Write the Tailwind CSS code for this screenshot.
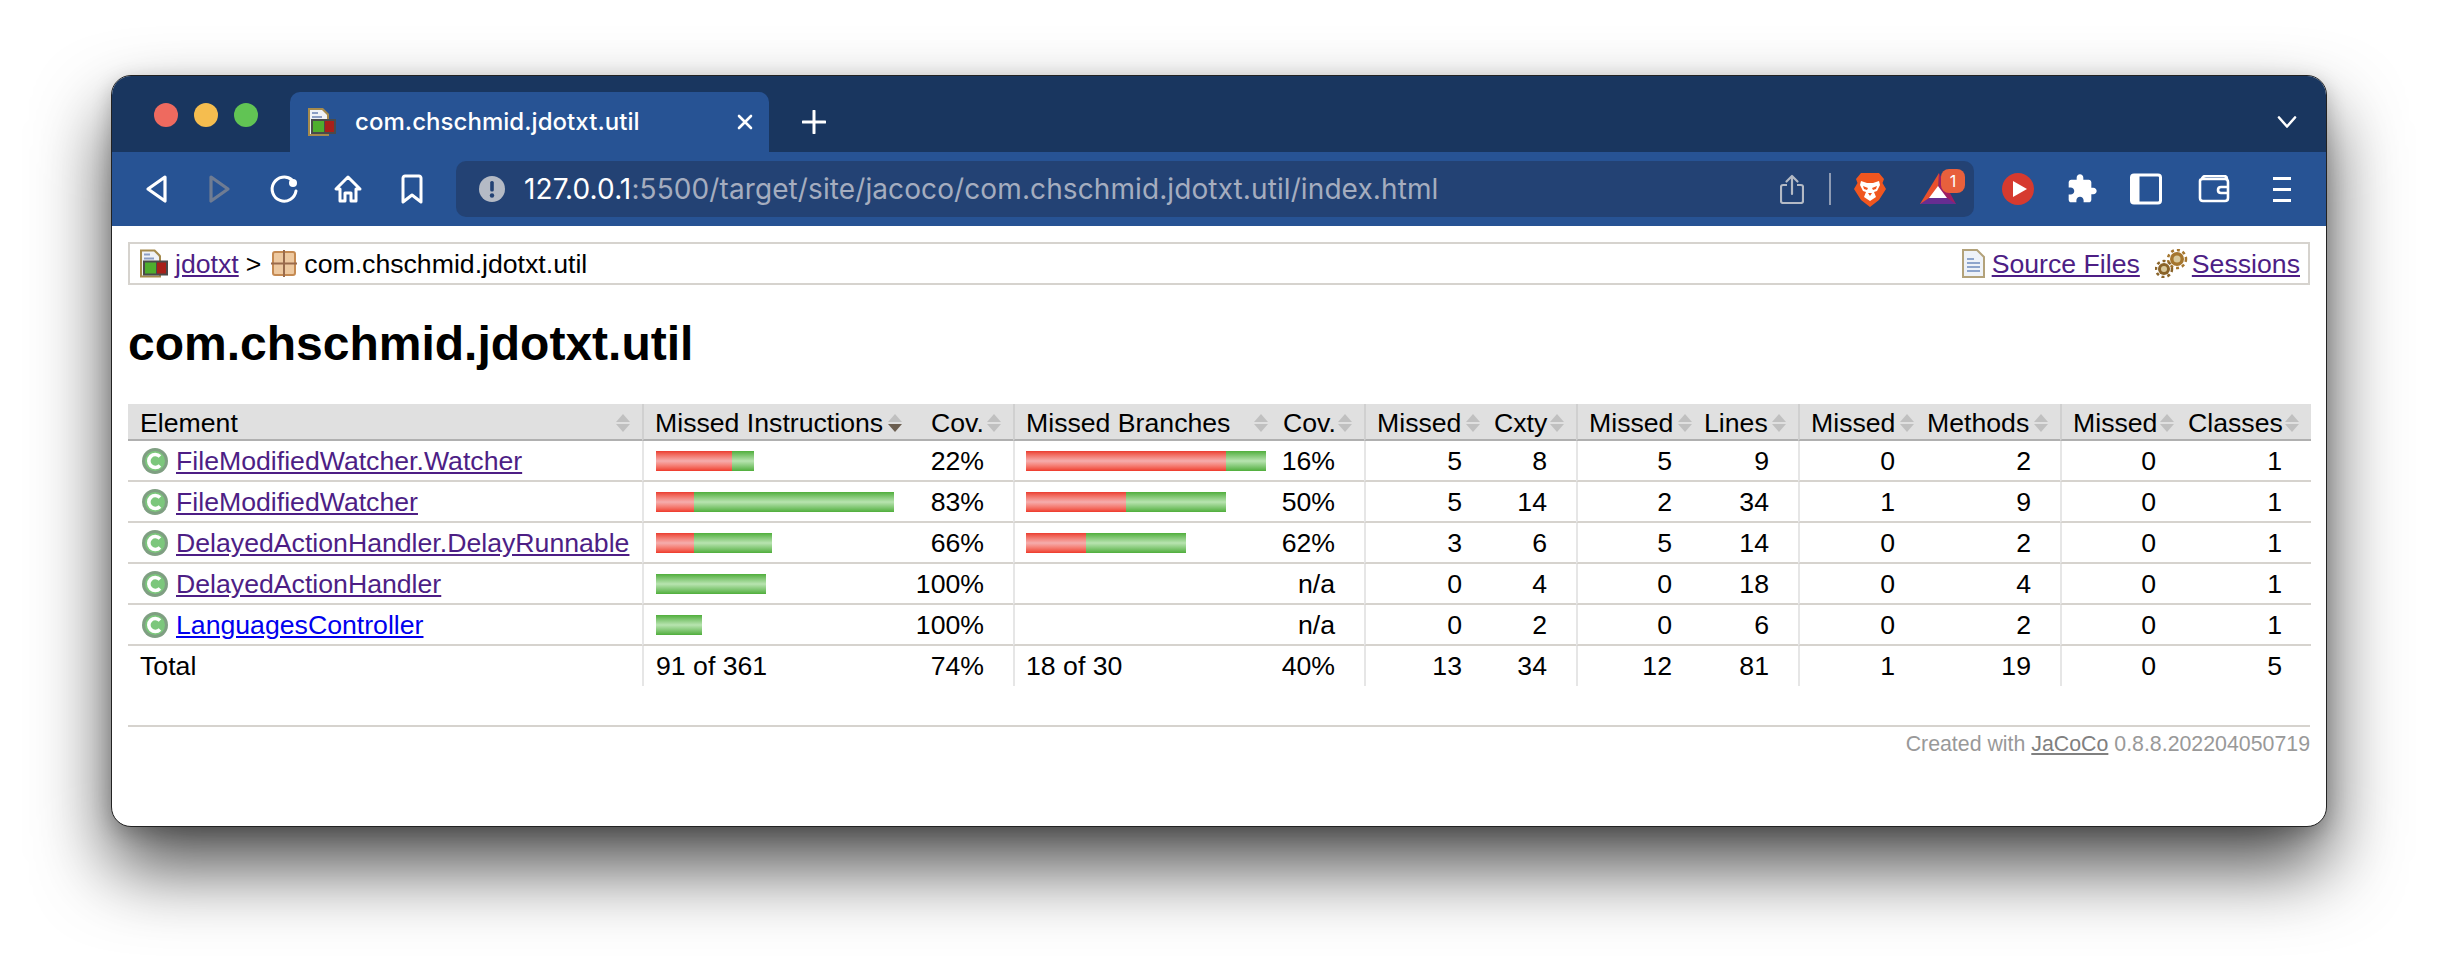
<!doctype html>
<html><head><meta charset="utf-8"><title>com.chschmid.jdotxt.util</title>
<script src="https://cdn.jsdelivr.net/npm/@tailwindcss/browser@4"></script></head>
<body class="w-[2438px] h-[974px] overflow-hidden bg-white pt-[75px] pl-[111px] [font-family:'Liberation_Sans',Arial,sans-serif]">
<div class="w-[2216px] h-[752px] rounded-[20px] border border-[#222] overflow-hidden bg-white shadow-[0_40px_74px_rgba(0,0,0,0.7),0_6px_20px_rgba(0,0,0,0.2)] flex flex-col">
  <!-- tab strip -->
  <div class="h-[76px] bg-[#19365f] flex items-end pl-[42px] shrink-0 [font-family:Inter,sans-serif]">
    <div class="self-start mt-[27px] flex gap-4">
      <div class="w-6 h-6 rounded-full bg-[#ee6a5f]"></div>
      <div class="w-6 h-6 rounded-full bg-[#f5bd4f]"></div>
      <div class="w-6 h-6 rounded-full bg-[#61c454]"></div>
    </div>
    <div class="ml-8 w-[479px] h-[60px] rounded-t-[10px] bg-[#275394] flex items-center pl-[18px] text-white text-[24px] font-medium">
      <svg width="28" height="28" viewBox="0 0 28 28" class="shrink-0"><path d="M0 0H15L21 6V28H0Z" fill="#a58a4c"/><path d="M2 2H14L19 7V26H2Z" fill="#f0f2f6"/><rect x="4" y="4" width="6" height="2" fill="#8b9dc3"/><rect x="4" y="8" width="10" height="2" fill="#8b9dc3"/><rect x="3" y="11" width="25" height="15" fill="#4a4a4a"/><rect x="5" y="13" width="11" height="11" fill="#4fae2e"/><rect x="17" y="13" width="9" height="11" fill="#a8201a"/></svg>
      <span class="ml-[19px] tracking-[0.05px]">com.chschmid.jdotxt.util</span>
      <svg width="18" height="18" viewBox="0 0 18 18" class="ml-auto mr-[15px]"><path d="M3 3L15 15M15 3L3 15" stroke="#fff" stroke-width="2.6" stroke-linecap="round"/></svg>
    </div>
    <svg width="24" height="24" viewBox="0 0 24 24" class="ml-[33px] mb-[18px]"><path d="M12 1V23M1 12H23" stroke="#fff" stroke-width="3" stroke-linecap="round"/></svg>
    <svg width="20" height="12" viewBox="0 0 20 12" class="ml-auto mr-[29px] mb-[24px]"><path d="M2 1.5L10 10.5L18 1.5" fill="none" stroke="#fff" stroke-width="2.6" stroke-linecap="round" stroke-linejoin="round"/></svg>
  </div>
  <!-- toolbar -->
  <div class="h-[74px] bg-[#275394] flex items-center pl-[28px] shrink-0 [font-family:Inter,sans-serif]">
    <div class="flex gap-8">
      <svg width="32" height="32" viewBox="0 0 32 32"><path d="M25 4L8 16L25 28Z" fill="none" stroke="#fff" stroke-width="3.2" stroke-linejoin="round"/></svg>
      <svg width="32" height="32" viewBox="0 0 32 32"><path d="M7 4L24 16L7 28Z" fill="none" stroke="#6f7c93" stroke-width="3.2" stroke-linejoin="round"/></svg>
      <svg width="32" height="32" viewBox="0 0 32 32"><path d="M24 7A12 12 0 1 0 28 18" fill="none" stroke="#fff" stroke-width="3" stroke-linecap="round"/><circle cx="25" cy="10" r="4" fill="#fff"/></svg>
      <svg width="32" height="32" viewBox="0 0 32 32"><path d="M16 4L4 16L8 16V28H13V20H19V28H24V16L28 16Z" fill="none" stroke="#fff" stroke-width="3" stroke-linejoin="round"/></svg>
      <svg width="32" height="32" viewBox="0 0 32 32"><path d="M7 5C7 4 8 3 9 3H23C24 3 25 4 25 5V29L16 22L7 29Z" fill="none" stroke="#fff" stroke-width="3" stroke-linejoin="round"/></svg>
    </div>
    <div class="ml-[28px] w-[1518px] h-14 rounded-[10px] bg-[#234274] flex items-center pl-[23px]">
      <svg width="26" height="26" viewBox="0 0 26 26" class="shrink-0"><circle cx="13" cy="13" r="13" fill="#b4bac5"/><rect x="11.2" y="5" width="3.6" height="10.5" rx="1.6" fill="#234274"/><circle cx="13" cy="19.5" r="2.2" fill="#234274"/></svg>
      <span class="ml-[19px] text-[28px] tracking-[0.1px] text-white whitespace-nowrap">127.0.0.1<span class="text-[#a5adbf]">:5500/target/site/jacoco/com.chschmid.jdotxt.util/index.html</span></span>
      <svg width="24" height="30" viewBox="0 0 24 30" class="ml-auto shrink-0"><path d="M7 11H3C2 11 1 12 1 13V27C1 28 2 29 3 29H21C22 29 23 28 23 27V13C23 12 22 11 21 11H17" fill="none" stroke="#b4bac5" stroke-width="2.2"/><path d="M12 20V2M6.5 7.5L12 2L17.5 7.5" fill="none" stroke="#b4bac5" stroke-width="2.2" stroke-linecap="round" stroke-linejoin="round"/></svg>
      <div class="ml-[25px] w-[2px] h-[32px] bg-[#8e9bb3]"></div>
      <svg width="32" height="35" viewBox="0 0 32 35" class="ml-[23px] shrink-0"><path d="M7 1L25 1L30 7L28.500 11L32 17L25 28L16 35L7 28L0 17L3.500 11L2 7Z" fill="#f0561f"/><path d="M7 9L13 11H19L25 9L26 13L23 19L20 20L22 25L16 29L10 25L12 20L9 19L6 13Z" fill="#fff"/><path d="M9 14L14 16L13 18L10 17ZM23 14L18 16L19 18L22 17ZM14 21H18L16 24Z" fill="#f0561f"/></svg>
      <div class="relative ml-[34px] mr-[18px] w-9 h-8 shrink-0">
        <svg width="36" height="32" viewBox="0 0 36 32"><path d="M19 0L0 31L18 31Z" fill="#e9502c"/><path d="M19 0L36 31L18 31Z" fill="#9e1f63"/><path d="M0 31L9 25H27L36 31Z" fill="#662d91"/><path d="M18 13L27 25H9Z" fill="#fff"/></svg>
        <div class="absolute -right-[9px] -top-[4px] w-6 h-6 rounded-[8px] bg-[#e8603c] text-white text-[16px] leading-6 text-center">1</div>
      </div>
    </div>
    <svg width="32" height="32" viewBox="0 0 32 32" class="ml-[28px] shrink-0"><circle cx="16" cy="16" r="16" fill="#d63a2f"/><path d="M11 8L25 16L11 24Z" fill="#fff"/></svg>
    <svg width="32" height="32" viewBox="0 0 24 24" class="ml-[32px] shrink-0"><path fill="#fff" d="M20.5 11H19V7c0-1.100-.9-2-2-2h-4V3.500C13 2.120 11.880 1 10.500 1S8 2.120 8 3.500V5H4c-1.100 0-1.990.9-1.990 2v3.800H3.500c1.490 0 2.700 1.210 2.700 2.700s-1.210 2.700-2.700 2.700H2V20c0 1.100.9 2 2 2h3.800v-1.500c0-1.490 1.210-2.700 2.700-2.700 1.490 0 2.700 1.210 2.700 2.700V22H17c1.100 0 2-.9 2-2v-4h1.500c1.380 0 2.500-1.120 2.500-2.500S21.880 11 20.500 11z"/></svg>
    <svg width="32" height="32" viewBox="0 0 32 32" class="ml-[32px] shrink-0"><rect x="1.500" y="2" width="29" height="28" rx="2.500" fill="none" stroke="#fff" stroke-width="3"/><rect x="1.500" y="2" width="8" height="28" fill="#fff"/></svg>
    <svg width="32" height="28" viewBox="0 0 32 28" class="ml-[36px] shrink-0"><path d="M4 4C4 2 6 1 8 1H26C28 1 29 2 29 4M2 6C2 5 3 4 5 4H27C29 4 30 5 30 7V23C30 25 29 26 27 26H5C3 26 2 25 2 23Z" fill="none" stroke="#fff" stroke-width="2.600"/><path d="M30 12H23C21 12 20 13 20 15C20 17 21 18 23 18H30" fill="none" stroke="#fff" stroke-width="2.600"/></svg>
    <div class="ml-[43px] w-[18px] flex flex-col gap-[8px] shrink-0"><div class="h-[3px] bg-white"></div><div class="h-[3px] bg-white"></div><div class="h-[3px] bg-white"></div></div>
  </div>
  <!-- page -->
  <div class="flex-1 pl-4 text-[26.67px] text-black">
    <div class="mt-[16px] w-[2182px] h-[43px] border-2 border-[#d6d3ce] flex items-center pl-[10px] pr-[8px] whitespace-nowrap">
      <svg width="28" height="29" viewBox="0 0 28 28"><path d="M0 0H15L21 6V28H0Z" fill="#a58a4c"/><path d="M2 2H14L19 7V26H2Z" fill="#f0f2f6"/><rect x="4" y="4" width="6" height="2" fill="#8b9dc3"/><rect x="4" y="8" width="10" height="2" fill="#8b9dc3"/><rect x="3" y="11" width="25" height="15" fill="#4a4a4a"/><rect x="5" y="13" width="11" height="11" fill="#4fae2e"/><rect x="17" y="13" width="9" height="11" fill="#a8201a"/></svg>
      <a class="ml-[7px] underline text-[#4d1e85]">jdotxt</a>
      <span class="ml-[7px]">&gt;</span>
      <svg width="26" height="27" viewBox="0 0 26 27" class="ml-[10px]"><rect x="2" y="2" width="22" height="23" rx="2" fill="#eec9a0" stroke="#c58a52" stroke-width="2"/><path d="M13 0V27M0 13.500H26" stroke="#9a6b4c" stroke-width="2"/></svg>
      <span class="ml-[7px]">com.chschmid.jdotxt.util</span>
      <svg width="23" height="29" viewBox="0 0 23 29" class="ml-auto"><path d="M1 1H15L22 8V28H1Z" fill="#eef2f8" stroke="#b3a27a" stroke-width="2"/><path d="M5 10H12M5 14H18M5 18H18M5 22H18" stroke="#8ea5cc" stroke-width="2"/></svg>
      <a class="ml-[7px] underline text-[#4d1e85]">Source Files</a>
      <svg width="33" height="29" viewBox="0 0 33 29" class="ml-[15px]"><circle cx="22" cy="10" r="7" fill="#a5762e"/><circle cx="22" cy="10" r="9" fill="none" stroke="#a5762e" stroke-width="2.500" stroke-dasharray="3 3"/><circle cx="22" cy="10" r="3.500" fill="#d8c89c"/><circle cx="9" cy="20" r="6" fill="#8a6328"/><circle cx="9" cy="20" r="8" fill="none" stroke="#8a6328" stroke-width="2.500" stroke-dasharray="3 3"/><circle cx="9" cy="20" r="3" fill="#d8c89c"/></svg>
      <a class="ml-[4px] underline text-[#4d1e85]">Sessions</a>
    </div>
    <h1 class="mt-[31px] mb-[33px] h-[55px] text-[48px] leading-[55px] font-bold">com.chschmid.jdotxt.util</h1>
    <table class="w-[2183px] table-fixed leading-[30px] border-separate border-spacing-0 [&_tbody_td]:h-[41px] [&_tbody_td]:border-b-2 [&_tbody_td]:border-b-[#d6d3ce] [&_tfoot_td]:h-[40px] [&_td]:pr-[29px] [&_td]:align-middle [&_td]:whitespace-nowrap">
      <colgroup><col class="w-[514px]"><col class="w-[286px]"><col class="w-[85px]"><col class="w-[267px]"><col class="w-[84px]"><col class="w-[127px]"><col class="w-[85px]"><col class="w-[125px]"><col class="w-[97px]"><col class="w-[126px]"><col class="w-[136px]"><col class="w-[125px]"><col class="w-[126px]"></colgroup>
      <thead>
        <tr class="bg-[#e0e0e0] [&_td]:h-[37px] [&_td]:pt-[2px] [&_td]:relative [&_td]:border-b-2 [&_td]:border-b-[#b0b0b0] [&_svg]:absolute [&_svg]:top-[10px]">
          <td class="pl-3">Element<svg class="right-[12px]" width="14" height="18" viewBox="0 0 14 18"><path d="M7 0L14 8H0ZM7 18L14 10H0Z" fill="#c0c0c0"/></svg></td>
          <td class="pl-[11px] border-l-2 border-l-[#d0d0d0]">Missed Instructions<svg class="right-[26px]" width="14" height="18" viewBox="0 0 14 18"><path d="M7 0L14 8H0Z" fill="#c0c0c0"/><path d="M7 18L14 10H0Z" fill="#6b5e50"/></svg></td>
          <td class="pl-[3px]">Cov.<svg class="right-[12px]" width="14" height="18" viewBox="0 0 14 18"><path d="M7 0L14 8H0ZM7 18L14 10H0Z" fill="#c0c0c0"/></svg></td>
          <td class="pl-[11px] border-l-2 border-l-[#d0d0d0]">Missed Branches<svg class="right-[12px]" width="14" height="18" viewBox="0 0 14 18"><path d="M7 0L14 8H0ZM7 18L14 10H0Z" fill="#c0c0c0"/></svg></td>
          <td class="pl-[3px]">Cov.<svg class="right-[12px]" width="14" height="18" viewBox="0 0 14 18"><path d="M7 0L14 8H0ZM7 18L14 10H0Z" fill="#c0c0c0"/></svg></td>
          <td class="pl-[11px] border-l-2 border-l-[#d0d0d0]">Missed<svg class="right-[11px]" width="14" height="18" viewBox="0 0 14 18"><path d="M7 0L14 8H0ZM7 18L14 10H0Z" fill="#c0c0c0"/></svg></td>
          <td class="pl-[3px]">Cxty<svg class="right-[12px]" width="14" height="18" viewBox="0 0 14 18"><path d="M7 0L14 8H0ZM7 18L14 10H0Z" fill="#c0c0c0"/></svg></td>
          <td class="pl-[11px] border-l-2 border-l-[#d0d0d0]">Missed<svg class="right-[9px]" width="14" height="18" viewBox="0 0 14 18"><path d="M7 0L14 8H0ZM7 18L14 10H0Z" fill="#c0c0c0"/></svg></td>
          <td class="pl-[3px]">Lines<svg class="right-[12px]" width="14" height="18" viewBox="0 0 14 18"><path d="M7 0L14 8H0ZM7 18L14 10H0Z" fill="#c0c0c0"/></svg></td>
          <td class="pl-[11px] border-l-2 border-l-[#d0d0d0]">Missed<svg class="right-[10px]" width="14" height="18" viewBox="0 0 14 18"><path d="M7 0L14 8H0ZM7 18L14 10H0Z" fill="#c0c0c0"/></svg></td>
          <td class="pl-[3px]">Methods<svg class="right-[12px]" width="14" height="18" viewBox="0 0 14 18"><path d="M7 0L14 8H0ZM7 18L14 10H0Z" fill="#c0c0c0"/></svg></td>
          <td class="pl-[11px] border-l-2 border-l-[#d0d0d0]">Missed<svg class="right-[11px]" width="14" height="18" viewBox="0 0 14 18"><path d="M7 0L14 8H0ZM7 18L14 10H0Z" fill="#c0c0c0"/></svg></td>
          <td class="pl-[3px]">Classes<svg class="right-[12px]" width="14" height="18" viewBox="0 0 14 18"><path d="M7 0L14 8H0ZM7 18L14 10H0Z" fill="#c0c0c0"/></svg></td>
        </tr>
      </thead>
      <tbody class="text-right [&_a]:ml-[8px] [&_a]:underline [&_a]:text-[#4d1e85] [&_svg]:shrink-0 [&_td:nth-child(even)]:border-l-2 [&_td:nth-child(even)]:border-l-[#e6e6e6]">
        <tr>
          <td class="pl-[14px] text-left"><div class="flex items-center"><svg width="26" height="26" viewBox="0 0 26 26"><circle cx="13" cy="13" r="13" fill="#7f9f82"/><circle cx="13" cy="13" r="10" fill="#7cc77c"/><path d="M18 8.500A6.500 6.500 0 1 0 18 17.500" fill="none" stroke="#fff" stroke-width="3.600"/></svg><a>FileModifiedWatcher.Watcher</a></div></td>
          <td class="text-left pl-[12px]"><div class="flex h-5"><div class="shrink-0 w-[76px] bg-linear-to-b from-[#ea3a2e] via-[#f5adad] to-[#ee382a]"></div><div class="shrink-0 w-[22px] bg-linear-to-b from-[#4fae3a] via-[#b8e4b0] to-[#4fae3a]"></div></div></td>
          <td>22%</td>
          <td class="text-left pl-[11px]"><div class="flex h-5"><div class="shrink-0 w-[200px] bg-linear-to-b from-[#ea3a2e] via-[#f5adad] to-[#ee382a]"></div><div class="shrink-0 w-[40px] bg-linear-to-b from-[#4fae3a] via-[#b8e4b0] to-[#4fae3a]"></div></div></td>
          <td>16%</td><td>5</td><td>8</td><td>5</td><td>9</td><td>0</td><td>2</td><td>0</td><td>1</td>
        </tr>
        <tr>
          <td class="pl-[14px] text-left"><div class="flex items-center"><svg width="26" height="26" viewBox="0 0 26 26"><circle cx="13" cy="13" r="13" fill="#7f9f82"/><circle cx="13" cy="13" r="10" fill="#7cc77c"/><path d="M18 8.500A6.500 6.500 0 1 0 18 17.500" fill="none" stroke="#fff" stroke-width="3.600"/></svg><a>FileModifiedWatcher</a></div></td>
          <td class="text-left pl-[12px]"><div class="flex h-5"><div class="shrink-0 w-[38px] bg-linear-to-b from-[#ea3a2e] via-[#f5adad] to-[#ee382a]"></div><div class="shrink-0 w-[200px] bg-linear-to-b from-[#4fae3a] via-[#b8e4b0] to-[#4fae3a]"></div></div></td>
          <td>83%</td>
          <td class="text-left pl-[11px]"><div class="flex h-5"><div class="shrink-0 w-[100px] bg-linear-to-b from-[#ea3a2e] via-[#f5adad] to-[#ee382a]"></div><div class="shrink-0 w-[100px] bg-linear-to-b from-[#4fae3a] via-[#b8e4b0] to-[#4fae3a]"></div></div></td>
          <td>50%</td><td>5</td><td>14</td><td>2</td><td>34</td><td>1</td><td>9</td><td>0</td><td>1</td>
        </tr>
        <tr>
          <td class="pl-[14px] text-left"><div class="flex items-center"><svg width="26" height="26" viewBox="0 0 26 26"><circle cx="13" cy="13" r="13" fill="#7f9f82"/><circle cx="13" cy="13" r="10" fill="#7cc77c"/><path d="M18 8.500A6.500 6.500 0 1 0 18 17.500" fill="none" stroke="#fff" stroke-width="3.600"/></svg><a>DelayedActionHandler.DelayRunnable</a></div></td>
          <td class="text-left pl-[12px]"><div class="flex h-5"><div class="shrink-0 w-[38px] bg-linear-to-b from-[#ea3a2e] via-[#f5adad] to-[#ee382a]"></div><div class="shrink-0 w-[78px] bg-linear-to-b from-[#4fae3a] via-[#b8e4b0] to-[#4fae3a]"></div></div></td>
          <td>66%</td>
          <td class="text-left pl-[11px]"><div class="flex h-5"><div class="shrink-0 w-[60px] bg-linear-to-b from-[#ea3a2e] via-[#f5adad] to-[#ee382a]"></div><div class="shrink-0 w-[100px] bg-linear-to-b from-[#4fae3a] via-[#b8e4b0] to-[#4fae3a]"></div></div></td>
          <td>62%</td><td>3</td><td>6</td><td>5</td><td>14</td><td>0</td><td>2</td><td>0</td><td>1</td>
        </tr>
        <tr>
          <td class="pl-[14px] text-left"><div class="flex items-center"><svg width="26" height="26" viewBox="0 0 26 26"><circle cx="13" cy="13" r="13" fill="#7f9f82"/><circle cx="13" cy="13" r="10" fill="#7cc77c"/><path d="M18 8.500A6.500 6.500 0 1 0 18 17.500" fill="none" stroke="#fff" stroke-width="3.600"/></svg><a>DelayedActionHandler</a></div></td>
          <td class="text-left pl-[12px]"><div class="flex h-5"><div class="shrink-0 w-[110px] bg-linear-to-b from-[#4fae3a] via-[#b8e4b0] to-[#4fae3a]"></div></div></td>
          <td><div class="-ml-4">100%</div></td><td></td>
          <td>n/a</td><td>0</td><td>4</td><td>0</td><td>18</td><td>0</td><td>4</td><td>0</td><td>1</td>
        </tr>
        <tr>
          <td class="pl-[14px] text-left"><div class="flex items-center"><svg width="26" height="26" viewBox="0 0 26 26"><circle cx="13" cy="13" r="13" fill="#7f9f82"/><circle cx="13" cy="13" r="10" fill="#7cc77c"/><path d="M18 8.500A6.500 6.500 0 1 0 18 17.500" fill="none" stroke="#fff" stroke-width="3.600"/></svg><a class="text-[#0000ee]!">LanguagesController</a></div></td>
          <td class="text-left pl-[12px]"><div class="flex h-5"><div class="shrink-0 w-[46px] bg-linear-to-b from-[#4fae3a] via-[#b8e4b0] to-[#4fae3a]"></div></div></td>
          <td><div class="-ml-4">100%</div></td><td></td>
          <td>n/a</td><td>0</td><td>2</td><td>0</td><td>6</td><td>0</td><td>2</td><td>0</td><td>1</td>
        </tr>
      </tbody>
      <tfoot class="text-right [&_td:nth-child(even)]:border-l-2 [&_td:nth-child(even)]:border-l-[#e6e6e6]">
        <tr>
          <td class="pl-3 text-left">Total</td>
          <td class="text-left pl-[12px]">91 of 361</td>
          <td>74%</td>
          <td class="text-left pl-[11px]">18 of 30</td>
          <td>40%</td><td>13</td><td>34</td><td>12</td><td>81</td><td>1</td><td>19</td><td>0</td><td>5</td>
        </tr>
      </tfoot>
    </table>
    <div class="mt-[39px] w-[2182px] border-t-2 border-[#d6d3ce] pt-[2px] text-right text-[21.33px] text-[#999]">Created with <a class="underline text-[#808080]">JaCoCo</a> 0.8.8.202204050719</div>
  </div>
</div>
</body></html>
